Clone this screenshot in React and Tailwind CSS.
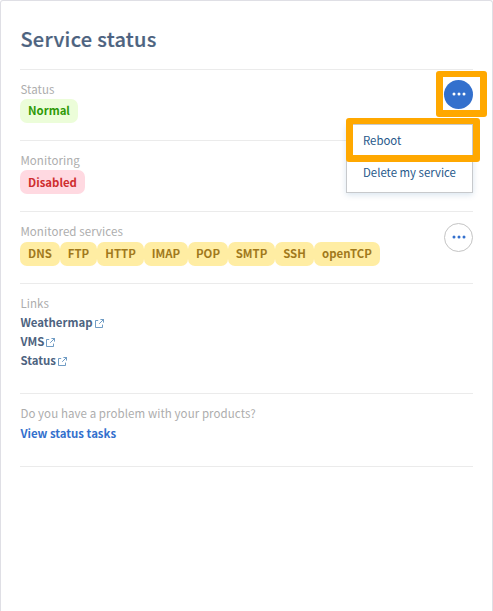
const tags = [
  ['DNS', 'w-[40px]'],
  ['FTP', 'w-[37px]'],
  ['HTTP', 'w-[47px]'],
  ['IMAP', 'w-[44px]'],
  ['POP', 'w-[40px]'],
  ['SMTP', 'w-[47px]'],
  ['SSH', 'w-[39px]'],
  ['openTCP', 'w-[66px]'],
];

const semibold = 'text-[11.4px] font-bold';
const badge = `flex h-6 items-center justify-center rounded-[7px] leading-[22px] ${semibold}`;

function Dots() {
  return (
    <svg viewBox="0 0 14 4" className="mb-px h-1 w-[14px]" fill="currentColor">
      <circle cx="2" cy="2" r="1.5" />
      <circle cx="7" cy="2" r="1.5" />
      <circle cx="12" cy="2" r="1.5" />
    </svg>
  );
}

function External() {
  return (
    <svg viewBox="0 0 9 9" className="ml-[2px] h-[9px] w-[9px] text-[#4b83b5]" fill="none" stroke="currentColor" strokeWidth="0.8">
      <path d="M3.2 1.5H.5v7h7V5.6M5.4.5h3.1v3.1M8.5.5L4.2 4.8" />
    </svg>
  );
}

function Label({ children }) {
  return <div className="h-5 pl-[0.4px] text-[11.5px] leading-[18px] tracking-[0.08px] text-[#adadad]">{children}</div>;
}

function Link({ children }) {
  return (
    <a className={`flex h-[19px] items-center pl-[0.4px] leading-[17px] text-[#4d6380] ${semibold}`}>
      <span className="pb-[2px]">{children}</span>
      <External />
    </a>
  );
}

export default function App() {
  return (
    <div className="relative h-[611px] w-[493px] overflow-hidden rounded-t-[3px] border border-b-0 border-[#dfdfe5] bg-white px-[19px] font-['Noto_Sans_CJK_SC',sans-serif] whitespace-nowrap">
      <h2 className="h-[68px] pt-[22px] pl-[0.4px] text-[20px] leading-8 font-medium tracking-[0.3px] text-[#4d6380] [-webkit-text-stroke:0.2px_#4d6380]">Service status</h2>
      <section className="relative h-[71px] border-t border-[#ebebeb] pt-[10px]">
        <Label>Status</Label>
        <div className={`${badge} w-[58px] -translate-y-px bg-[#ecfdd9] pb-[2px] text-[#2f9a08]`}>Normal</div>
        <button className="absolute top-[10px] right-0 flex size-[29px] items-center justify-center rounded-full bg-[#3370cd] text-white">
          <Dots />
        </button>
        <div className="absolute top-px -right-[14px] z-20 h-[46px] w-[51px] rounded-[3px] border-[7px] border-t-[6px] border-[#ffa800]" />
        <div className="absolute top-[54px] right-0 z-10 h-[69px] w-[127px] border border-[#c7c9cc] bg-white text-[11.4px] leading-5 text-[#27588a] shadow-[0_2px_6px_rgba(0,80,150,0.15)]">
          <div className="px-4 pt-[5px]">Reboot</div>
          <div className="px-4 pt-3">Delete my service</div>
        </div>
        <div className="absolute top-[48px] -right-[7px] z-20 h-[44px] w-[134px] rounded-[3px] border-[7px] border-t-[6px] border-[#ffa800]" />
      </section>
      <section className="h-[71px] border-t border-[#ebebeb] pt-[10px]">
        <Label>Monitoring</Label>
        <div className={`${badge} w-[65px] -translate-y-px bg-[#ffd9e1] text-[#cf2e2e]`}>Disabled</div>
      </section>
      <section className="relative h-[72px] border-t border-[#ebebeb] pt-[10px]">
        <Label>Monitored services</Label>
        <div className="flex">
          {tags.map(([name, width]) => (
            <span key={name} className={`${badge} ${width} bg-[#ffeda3] pb-[2px] text-[#a1791c]`}>{name}</span>
          ))}
        </div>
        <button className="absolute top-[11px] right-0 flex size-[29px] items-center justify-center rounded-full border border-[#c4c4c4] text-[#3370cd]">
          <Dots />
        </button>
      </section>
      <section className="h-[110px] border-t border-[#ebebeb] pt-[10px]">
        <Label>Links</Label>
        <Link>Weathermap</Link>
        <Link>VMS</Link>
        <Link>Status</Link>
      </section>
      <section className="h-[74px] border-y border-[#ebebeb] pt-[10px]">
        <Label>Do you have a problem with your products?</Label>
        <a className={`block pl-[0.4px] leading-[19px] text-[#3370cd] ${semibold}`}>View status tasks</a>
      </section>
    </div>
  );
}
